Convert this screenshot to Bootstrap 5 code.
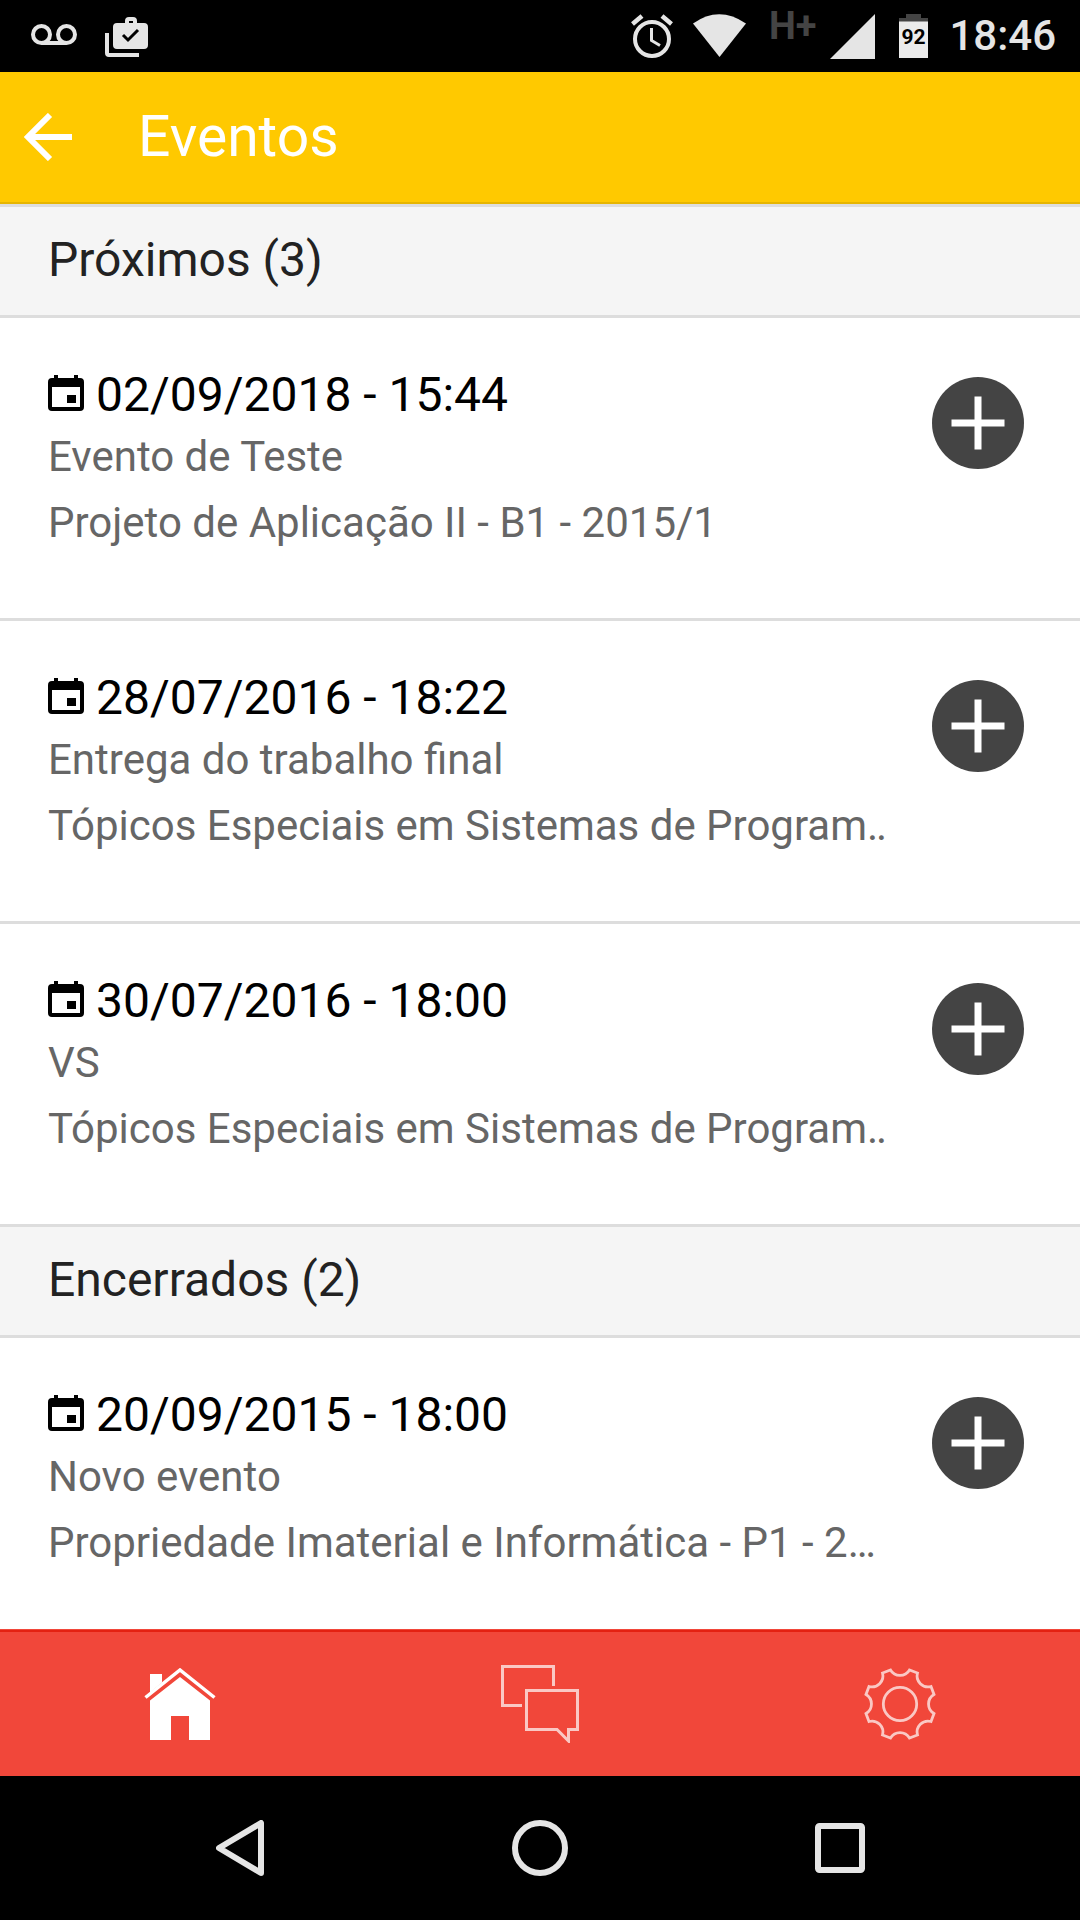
<!DOCTYPE html>
<html lang="pt-BR">
<head>
<meta charset="utf-8">
<meta name="viewport" content="width=device-width, initial-scale=1">
<title>Eventos</title>
<link href="https://cdn.jsdelivr.net/npm/bootstrap@5.3.0/dist/css/bootstrap.min.css" rel="stylesheet">
<style>
  body { font-family: Roboto, "Liberation Sans", sans-serif; color: #000; background: #fff; }
  svg { display: block; flex: none; }
  .status-bar { height: 72px; padding: 0 24px 0 31px; background: #000; color: #e5e5e5; }
  .clock { margin-left: 20px; font-size: 42px; line-height: 74px; font-weight: 500; }
  .net-type { margin: 0 14px 0 20px; font-size: 38px; line-height: 55px; font-weight: 700; color: #444; }
  .app-bar { height: 132px; padding: 0 24px; gap: 66px; background: #ffc900; border-bottom: 2px solid #e6b500; color: #fff; }
  .app-title { font-size: 57px; line-height: 66px; font-weight: 400; }
  .event-scroll { min-height: 0; scrollbar-width: none; }
  .divider { padding: 24px 48px 27px; background: #f5f5f5; border-bottom: 3px solid #ddd; color: #222; font-size: 48px; line-height: 57px; font-weight: 400; }
  .event-row { gap: 47px; padding: 48px 56px 68px 48px; border-bottom: 3px solid #ddd; }
  .event-list { border-top: 3px solid #ddd; }
  .event-date { gap: 12px; margin-bottom: 6px; font-size: 48px; line-height: 58px; font-weight: 400; }
  .event-line { font-size: 42px; line-height: 54px; color: #666; }
  .event-line + .event-line { margin-top: 12px; }
  .add-btn { margin-top: 11px; width: 92px; height: 92px; background: #444; }
  .tab-bar { height: 147px; padding-top: 3px; background: linear-gradient(#f1473a 1px, #e42112 1px 3px, #f1473a 3px); color: #fff; }
  .tab-off { opacity: .7; }
  .sys-nav { height: 144px; padding: 0 90px; background: #000; color: #e5e5e5; }
</style>
</head>
<body>
<svg width="0" height="0" class="position-absolute" aria-hidden="true">
  <symbol id="calendar" viewBox="0 0 36 36">
    <path fill-rule="evenodd" d="M6 0h4v3h16V0h4v3h2a4 4 0 0 1 4 4v25a4 4 0 0 1-4 4H4a4 4 0 0 1-4-4V7a4 4 0 0 1 4-4h2zM4 12v20h28V12z"/>
    <path d="M19 20h9v8h-9z"/>
  </symbol>
  <symbol id="plus" viewBox="0 0 54 54"><path d="M27 0.500V53.500M0.500 27H53.500" stroke="#fff" stroke-width="7"/></symbol>
</svg>

<div class="d-flex flex-column vh-100">
  <div class="status-bar d-flex align-items-center justify-content-between flex-shrink-0">
    <div class="d-flex align-items-center gap-4">
      <svg width="46" height="72" viewBox="0 0 46 72" fill="none" stroke="currentColor" stroke-width="4"><circle cx="10.500" cy="34.500" r="8.500"/><circle cx="35.500" cy="34.500" r="8.500"/><path d="M10.500 43h25"/></svg>
      <svg class="ms-1" width="43" height="72" viewBox="0 0 43 72"><path fill="currentColor" fill-rule="evenodd" d="M12 23h8v-2a4 4 0 0 1 4-4h4a4 4 0 0 1 4 4v2h7a4 4 0 0 1 4 4v18a4 4 0 0 1-4 4H12a4 4 0 0 1-4-4V27a4 4 0 0 1 4-4zM24 23h4v-2h-4z"/><path d="M18 35l5 5 10-10" fill="none" stroke="#000" stroke-width="3"/><path d="M2 33v20a2 2 0 0 0 2 2h30" fill="none" stroke="currentColor" stroke-width="4"/></svg>
    </div>
    <div class="d-flex align-items-center">
      <svg width="42" height="72" viewBox="0 0 42 72" fill="none" stroke="currentColor"><circle cx="21" cy="39" r="17" stroke-width="4"/><path d="M20.500 28v12.500l8.500 5" stroke-width="3"/><path d="M1.500 24l9.500-8M40.500 24l-9.500-8" stroke-width="4.500"/></svg>
      <svg class="ms-3" width="60" height="72" viewBox="0 0 60 72"><path fill="currentColor" d="M4 23.500Q30 5 57 23.500L30.500 57z"/></svg>
      <span class="net-type align-self-start">H+</span>
      <svg width="45" height="72" viewBox="0 0 45 72"><path fill="currentColor" d="M45 14v45H0z"/></svg>
      <svg class="ms-4" width="30" height="72" viewBox="0 0 30 72"><path fill="#444" d="M0 18h7v-4h15v4h7v4H0z"/><path fill="#ebebeb" d="M0 21.500h29V58H0z"/><text x="14.500" y="44" text-anchor="middle" font-size="21" font-weight="700">92</text></svg>
      <span class="clock">18:46</span>
    </div>
  </div>

  <header class="app-bar d-flex align-items-center flex-shrink-0">
    <a href="#" class="text-white" aria-label="Voltar"><svg width="48" height="48" viewBox="0 0 48 48" fill="none" stroke="currentColor" stroke-width="6"><path d="M26 2L4 24l22 22M4 24h44"/></svg></a>
    <h1 class="app-title mb-0">Eventos</h1>
  </header>

  <main class="event-scroll flex-grow-1 overflow-auto">
    <div class="event-list">
      <h2 class="divider mb-0">Próximos (3)</h2>
      <article class="event-row d-flex align-items-start">
        <div class="flex-grow-1 overflow-hidden text-nowrap">
          <h3 class="event-date d-flex align-items-center"><svg class="mb-1" width="36" height="36"><use href="#calendar"/></svg>02/09/2018 - 15:44</h3>
          <p class="event-line mb-0">Evento de Teste</p>
          <p class="event-line mb-0">Projeto de Aplicação II - B1 - 2015/1</p>
        </div>
        <button type="button" class="add-btn btn rounded-circle border-0 p-0 d-flex flex-shrink-0 align-items-center justify-content-center" aria-label="Adicionar"><svg width="54" height="54"><use href="#plus"/></svg></button>
      </article>
      <article class="event-row d-flex align-items-start">
        <div class="flex-grow-1 overflow-hidden text-nowrap">
          <h3 class="event-date d-flex align-items-center"><svg class="mb-1" width="36" height="36"><use href="#calendar"/></svg>28/07/2016 - 18:22</h3>
          <p class="event-line mb-0">Entrega do trabalho final</p>
          <p class="event-line mb-0">Tópicos Especiais em Sistemas de Program…</p>
        </div>
        <button type="button" class="add-btn btn rounded-circle border-0 p-0 d-flex flex-shrink-0 align-items-center justify-content-center" aria-label="Adicionar"><svg width="54" height="54"><use href="#plus"/></svg></button>
      </article>
      <article class="event-row d-flex align-items-start">
        <div class="flex-grow-1 overflow-hidden text-nowrap">
          <h3 class="event-date d-flex align-items-center"><svg class="mb-1" width="36" height="36"><use href="#calendar"/></svg>30/07/2016 - 18:00</h3>
          <p class="event-line mb-0">VS</p>
          <p class="event-line mb-0">Tópicos Especiais em Sistemas de Program…</p>
        </div>
        <button type="button" class="add-btn btn rounded-circle border-0 p-0 d-flex flex-shrink-0 align-items-center justify-content-center" aria-label="Adicionar"><svg width="54" height="54"><use href="#plus"/></svg></button>
      </article>
      <h2 class="divider mb-0">Encerrados (2)</h2>
      <article class="event-row d-flex align-items-start">
        <div class="flex-grow-1 overflow-hidden text-nowrap">
          <h3 class="event-date d-flex align-items-center"><svg class="mb-1" width="36" height="36"><use href="#calendar"/></svg>20/09/2015 - 18:00</h3>
          <p class="event-line mb-0">Novo evento</p>
          <p class="event-line mb-0">Propriedade Imaterial e Informática - P1 - 2…</p>
        </div>
        <button type="button" class="add-btn btn rounded-circle border-0 p-0 d-flex flex-shrink-0 align-items-center justify-content-center" aria-label="Adicionar"><svg width="54" height="54"><use href="#plus"/></svg></button>
      </article>
    </div>
  </main>

  <nav class="tab-bar nav nav-fill nav-justified flex-nowrap flex-shrink-0">
    <a class="nav-item text-white d-flex align-items-center justify-content-center" href="#" aria-label="Início"><svg width="72" height="72" viewBox="0 0 72 72" fill="currentColor"><path d="M6 6h12v8.500L6 24.500zM6 32.500L36 9l30 23.500V72H45V48H27v24H6z"/><path d="M1.500 29.500L36 2l34.500 27.500" fill="none" stroke="currentColor" stroke-width="3.500"/></svg></a>
    <a class="nav-item text-white d-flex align-items-center justify-content-center" href="#" aria-label="Mensagens"><svg class="tab-off" width="78" height="78" viewBox="0 0 78 78" fill="none" stroke="currentColor" stroke-width="3"><path d="M52.500 21V1.500h-51v39H21M25.500 25.500h51v39h-9V76L56 64.500H25.500z"/></svg></a>
    <a class="nav-item text-white d-flex align-items-center justify-content-center" href="#" aria-label="Configurações"><svg class="tab-off" width="72" height="72" viewBox="0 0 72 72" fill="none" stroke="currentColor" stroke-width="2.800"><path d="M26.500 2A11 11 0 0 0 45.500 2L53.500 5A11 11 0 0 0 67 18.500L70 26.500A11 11 0 0 0 70 45.500L67 53.500A11 11 0 0 0 53.500 67L45.500 70A11 11 0 0 0 26.500 70L18.500 67A11 11 0 0 0 5 53.500L2 45.500A11 11 0 0 0 2 26.500L5 18.500A11 11 0 0 0 18.500 5z"/><circle cx="36" cy="36" r="16.700"/></svg></a>
  </nav>

  <div class="sys-nav row g-0 align-items-center flex-shrink-0">
    <div class="col d-flex justify-content-center"><svg width="48" height="56" viewBox="0 0 48 56" fill="none" stroke="currentColor" stroke-width="6" stroke-linejoin="round"><path d="M45 3v50L3 28z"/></svg></div>
    <div class="col d-flex justify-content-center"><svg width="56" height="56" viewBox="0 0 56 56" fill="none" stroke="currentColor" stroke-width="6"><circle cx="28" cy="28" r="25"/></svg></div>
    <div class="col d-flex justify-content-center"><svg width="50" height="50" viewBox="0 0 50 50" fill="none" stroke="currentColor" stroke-width="6"><rect x="3" y="3" width="44" height="44" rx="1.500"/></svg></div>
  </div>
</div>
<script src="https://cdn.jsdelivr.net/npm/bootstrap@5.3.0/dist/js/bootstrap.bundle.min.js"></script>
</body>
</html>
